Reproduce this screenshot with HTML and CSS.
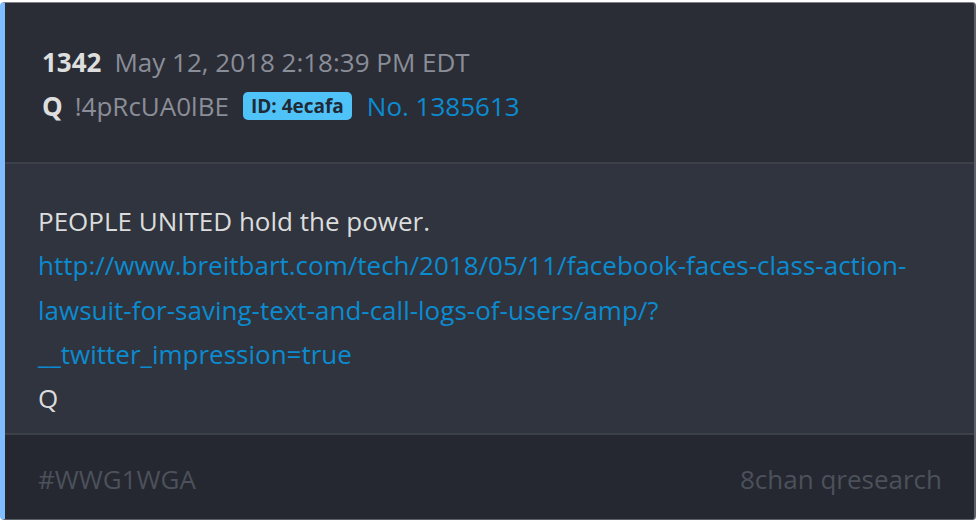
FILE: index.html
```html
<!DOCTYPE html>
<html>
<head>
<meta charset="utf-8">
<link rel="stylesheet" href="styles.css">
</head>
<body>
<div class="card">
  <div class="head">
    <div class="row"><span class="num">1342</span><span class="date">May 12, 2018 2:18:39 PM EDT</span></div>
    <div class="row"><span class="name">Q</span><span class="trip">!4pRcUA0lBE</span><span class="badge">ID: 4ecafa</span><span class="no">No. 1385613</span></div>
  </div>
  <div class="body">
    <p>PEOPLE UNITED hold the power.</p>
    <p class="link">http://www.breitbart.com/tech/2018/05/11/facebook-faces-class-action-lawsuit-for-saving-text-and-call-logs-of-users/amp/?<wbr>__twitter_impression=true</p>
    <p>Q</p>
  </div>
  <div class="foot">
    <span>#WWG1WGA</span>
    <span>8chan qresearch</span>
  </div>
</div>
</body>
</html>
```
FILE: styles.css
```css
html, body { margin: 0; padding: 0; background: #ffffff; }
body { font-family: "Open Sans", sans-serif; }
.card {
  margin: 2px 2px 2px 0;
  height: 518px;
  box-sizing: border-box;
  border-left: 5px solid #80bdff;
  border-top: 1px solid #7d8089;
  border-right: 2px solid #5b5f68;
  border-bottom: 1px solid #5b5f68;
  border-radius: 4px;
  overflow: hidden;
  display: flex;
  flex-direction: column;
  background: #2a2d36;
}
.head {
  background: #2a2d36;
  padding: 37px 37px 0;
  border-bottom: 2px solid #3c4049;
  height: 161px;
  box-sizing: border-box;
}
.row { display: flex; align-items: center; height: 44px; font-size: 26px; line-height: 44px; }
.num { font-weight: 700; color: #dedede; margin-right: 13px; }
.date { color: #8a8e98; }
.name { font-weight: 700; color: #dedede; margin-right: 12px; }
.trip { color: #8a8e98; margin-right: 14px; }
.badge {
  background: #4fc3f7; color: #1f2a36; font-weight: 700; font-size: 19px;
  line-height: 28px; padding: 0 8px; border-radius: 5px; margin-right: 15px;
}
.no { color: #0b8bd0; }
.body {
  background: #2f343e;
  padding: 35px 33px 0;
  height: 271px;
  box-sizing: border-box;
  border-bottom: 2px solid #3c4049;
  font-size: 26px;
  line-height: 44.3px;
  color: #dcdcdc;
}
.body p { margin: 0; }
.link { color: #0b8bd0; }
.foot {
  flex: 1;
  background: #252830;
  display: flex;
  justify-content: space-between;
  align-items: center;
  padding: 4px 32px 0 33px;
  font-size: 26px;
  color: #4c515b;
}
```
